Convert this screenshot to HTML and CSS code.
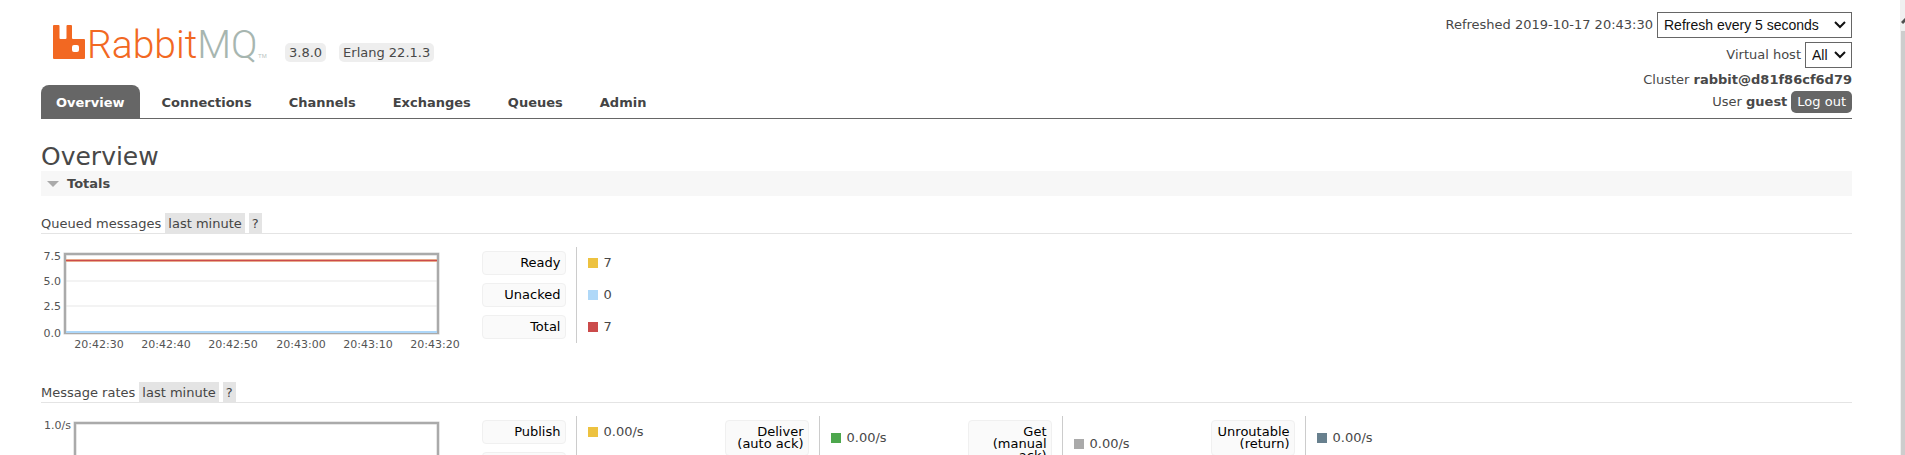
FILE: index.html
```html
<!DOCTYPE html>
<html lang="en">
<head>
    <meta charset="UTF-8">
    <meta name="viewport" content="width=device-width, initial-scale=1.0">
    <title>RabbitMQ Management</title>
    <link rel="stylesheet" href="styles.css">
</head>
<body>
    <header class="header">
        <div class="brand">
            <a class="logo" href="#" aria-label="RabbitMQ">
                <svg width="216" height="42" viewBox="0 0 216 42">
                    <path fill="#f26822" fill-rule="evenodd" d="M1 5h4.500q1 0 1 1v12q0 1 1 1h5q1 0 1-1V6q0-1 1-1H18q1 0 1 1v12q0 1 1 1h11q1 0 1 1v18q0 1-1 1H1q-1 0-1-1V6q0-1 1-1zM21 25q-2 0-2 2v3q0 2 2 2h3q2 0 2-2v-3q0-2-2-2z"/>
                    <text class="logo-text" x="34" y="38"><tspan fill="#f26822">Rabbit</tspan><tspan fill="#a7b6b0">MQ</tspan></text>
                    <text class="logo-tm" x="205" y="38">TM</text>
                </svg>
            </a>
            <span class="version">3.8.0</span>
            <span class="version">Erlang 22.1.3</span>
        </div>
        <nav>
            <ul class="tabs">
                <li><a class="selected" href="#">Overview</a></li>
                <li><a href="#/connections">Connections</a></li>
                <li><a href="#/channels">Channels</a></li>
                <li><a href="#/exchanges">Exchanges</a></li>
                <li><a href="#/queues">Queues</a></li>
                <li><a href="#/users">Admin</a></li>
            </ul>
        </nav>
        <div class="login">
            <div class="login-row">
                <label for="update-every">Refreshed 2019-10-17 20:43:30</label>
                <select id="update-every">
                    <option>Refresh every 5 seconds</option>
                </select>
            </div>
            <div class="login-row login-vhost">
                <label for="vhost">Virtual host</label>
                <select id="vhost">
                    <option>All</option>
                </select>
            </div>
            <div class="login-row"><span>Cluster <b>rabbit@d81f86cf6d79</b></span></div>
            <div class="login-row">
                <span>User <b>guest</b></span>
                <button class="logout" type="button">Log out</button>
            </div>
        </div>
    </header>

    <main>
        <h1>Overview</h1>
        <h2>Totals</h2>

        <section>
            <h3>Queued messages <button type="button">last minute</button> <button type="button">?</button></h3>
            <div class="row">
                <svg class="chart" width="428" height="104" viewBox="0 0 428 104">
                    <path stroke="#f3f3f3" stroke-width="2" d="M25 34h372M25 59h372"/>
                    <rect x="24" y="7" width="373" height="79" fill="none" stroke="#cfcfcf" stroke-width="3"/>
                    <rect x="24" y="7" width="373" height="79" fill="none" stroke="#aaa" stroke-width="2"/>
                    <path stroke="#aed7f9" stroke-width="2" d="M25 85h371"/>
                    <path stroke="#e8a98a" stroke-width="3" d="M25 13.500h371"/>
                    <path stroke="#cb4b4b" stroke-width="1" d="M25 13.500h371"/>
                    <g text-anchor="end">
                        <text x="20" y="13">7.5</text>
                        <text x="20" y="38">5.0</text>
                        <text x="20" y="63">2.5</text>
                        <text x="20" y="90">0.0</text>
                    </g>
                    <g text-anchor="middle">
                        <text x="58" y="101">20:42:30</text>
                        <text x="125" y="101">20:42:40</text>
                        <text x="192" y="101">20:42:50</text>
                        <text x="260" y="101">20:43:00</text>
                        <text x="327" y="101">20:43:10</text>
                        <text x="394" y="101">20:43:20</text>
                    </g>
                </svg>
                <table class="legend">
                    <tr><th><span>Ready</span></th><td><i class="yellow"></i>7</td></tr>
                    <tr><th><span>Unacked</span></th><td><i class="blue"></i>0</td></tr>
                    <tr><th><span>Total</span></th><td><i class="red"></i>7</td></tr>
                </table>
            </div>
        </section>

        <section>
            <h3>Message rates <button type="button">last minute</button> <button type="button">?</button></h3>
            <div class="row">
                <svg class="chart" width="428" height="104" viewBox="0 0 428 104">
                    <rect x="34" y="7" width="363" height="79" fill="none" stroke="#cfcfcf" stroke-width="3"/>
                    <rect x="34" y="7" width="363" height="79" fill="none" stroke="#aaa" stroke-width="2"/>
                    <text x="30" y="13" text-anchor="end">1.0/s</text>
                </svg>
                <table class="legend">
                    <tr><th><span>Publish</span></th><td><i class="yellow"></i>0.00/s</td></tr>
                    <tr><th><span>Publisher confirm</span></th><td><i class="blue"></i>0.00/s</td></tr>
                </table>
                <table class="legend">
                    <tr><th><span>Deliver (auto ack)</span></th><td><i class="green"></i>0.00/s</td></tr>
                </table>
                <table class="legend">
                    <tr><th><span>Get (manual ack)</span></th><td><i class="grey"></i>0.00/s</td></tr>
                </table>
                <table class="legend">
                    <tr><th><span>Unroutable (return)</span></th><td><i class="slate"></i>0.00/s</td></tr>
                </table>
            </div>
        </section>
    </main>

    <div class="scrollbar">
        <svg width="5" height="31" viewBox="0 0 5 31"><path fill="none" stroke="#505050" stroke-width="3" d="M1 23l5-5"/></svg>
    </div>
</body>
</html>
```
FILE: styles.css
```css
* {
    box-sizing: border-box;
}

html {
    height: 100%;
    overflow: hidden;
}

body {
    margin: 0;
    padding: 0 53px 0 41px;
    height: 100%;
    overflow: hidden;
    background: #fff;
    color: #484848;
    font: 13px/18px Verdana, "DejaVu Sans", sans-serif;
}

a {
    color: #444;
    text-decoration: none;
}

/* header */
.header {
    display: grid;
    grid-template-columns: 1fr auto;
    grid-template-rows: 85px auto;
    border-bottom: 1px solid #666;
}

.brand {
    display: flex;
    align-items: flex-end;
    gap: 13px;
    padding: 0 0 23px 12px;
}

.logo {
    margin-right: 3px;
}

.logo svg {
    display: block;
    overflow: visible;
}

.logo-text {
    font-family: Roboto, sans-serif;
    font-size: 39px;
    font-weight: 300;
}

.logo-tm {
    font-family: "Liberation Sans", Arial, sans-serif;
    font-size: 6px;
    fill: #b8c4c0;
}

.version {
    padding: 0 4px;
    line-height: 19px;
    background: #eee;
    border-radius: 5px;
}

.tabs {
    display: flex;
    gap: 7px;
    margin: 0;
    padding: 0;
    list-style: none;
}

.tabs a {
    display: block;
    padding: 2px 15px 0;
    line-height: 31px;
    font-weight: bold;
    border-radius: 8px 8px 0 0;
}

.tabs .selected {
    background: #666;
    color: #fff;
}

.login {
    grid-column: 2;
    grid-row: 1 / 3;
    padding-top: 12px;
}

.login-row {
    display: flex;
    justify-content: flex-end;
    align-items: center;
    gap: 4px;
    line-height: 22px;
}

.login-vhost {
    margin: 4px 0 1px;
}

.login select {
    appearance: none;
    height: 26px;
    padding: 0 32px 0 6px;
    border: 1px solid #666;
    border-radius: 0;
    background: #fff url("data:image/svg+xml,%3Csvg xmlns='http://www.w3.org/2000/svg' width='12' height='8'%3E%3Cpath fill='none' stroke='%23111' stroke-width='2' d='M1 1l5 5 5-5'/%3E%3C/svg%3E") no-repeat right 5px center;
    color: #111;
    font: 14px "Liberation Sans", Arial, sans-serif;
}

.login #vhost {
    padding-right: 23px;
}

.logout {
    height: 22px;
    padding: 0 6px;
    border: 0;
    border-radius: 5px;
    background: #666;
    color: #fff;
    font: inherit;
}

/* content */
h1 {
    margin: 24px 0 0;
    font-size: 25px;
    font-weight: normal;
    line-height: 28px;
}

h2 {
    display: flex;
    align-items: center;
    gap: 8px;
    margin: 0;
    padding-left: 6px;
    background: #f7f7f7;
    font-size: 13px;
    line-height: 25px;
}

h2::before {
    content: "";
    border: 6px solid transparent;
    border-top-color: #aaa;
    border-bottom: 0;
}

h3 {
    display: flex;
    gap: 4px;
    margin: 17px 0 13px;
    border-bottom: 1px solid #e4e4e4;
    font-size: 13px;
    font-weight: normal;
    line-height: 21px;
    height: 21px;
}

h3 button {
    height: 20px;
    padding: 0 3px;
    border: 0;
    background: #e4e4e4;
    color: #444;
    font: inherit;
}

.row {
    display: flex;
    align-items: flex-start;
    min-height: 118px;
}

.chart {
    flex: none;
    margin-right: 13px;
    font-size: 11px;
    fill: #545454;
}

.legend {
    width: 243px;
    border-collapse: collapse;
}

.legend th {
    width: 94px;
    padding: 4px 10px 4px 0;
    border-right: 1px solid #ccc;
    font-weight: normal;
}

.legend th span {
    display: block;
    padding: 5px 4px 5px 5px;
    border: 1px solid #f0f0f0;
    border-radius: 4px;
    background: #fafafa;
    color: #000;
    line-height: 12px;
    text-align: right;
}

.legend td {
    padding: 0 0 0 11px;
}

.legend i {
    display: inline-block;
    width: 10px;
    height: 10px;
    margin-right: 6px;
    vertical-align: -1px;
}

.yellow { background: #edc240; }
.blue   { background: #afd8f8; }
.red    { background: #cb4b4b; }
.green  { background: #4da74d; }
.grey   { background: #aaa; }
.slate  { background: #68808e; }

/* edge of the page scrollbar */
.scrollbar {
    position: fixed;
    top: 0;
    right: 0;
    bottom: 0;
    width: 5px;
    border-left: 1px solid #f0f0f0;
    background: #cdcdcd;
}

.scrollbar svg {
    display: block;
    background: #f0f0f0;
}
```
